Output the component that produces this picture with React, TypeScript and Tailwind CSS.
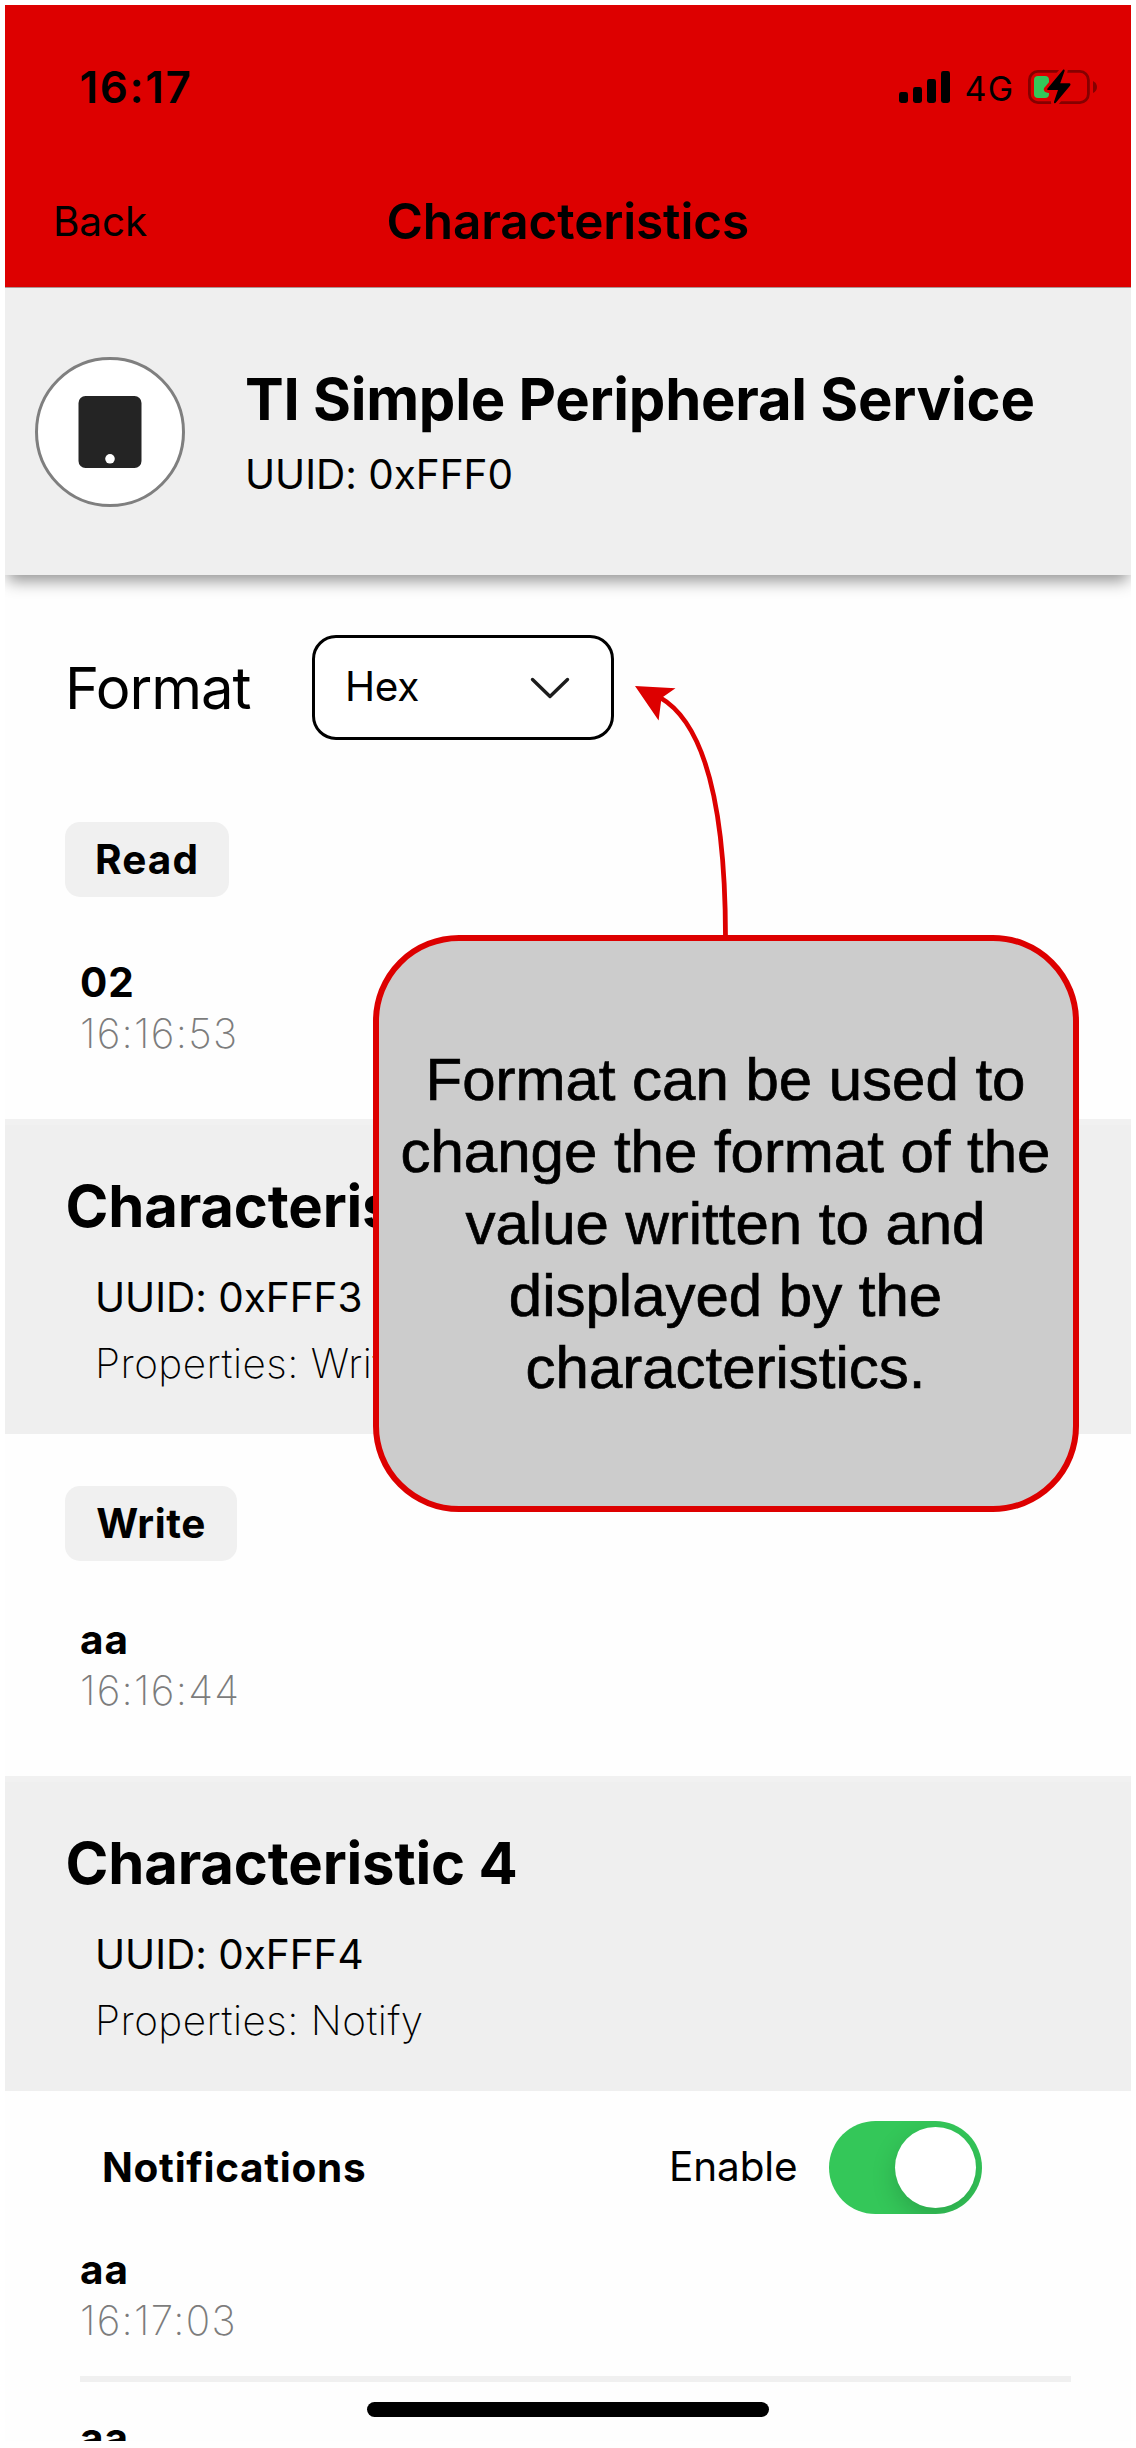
import React from "react";

function SignalIcon() {
  return (
    <svg width="51" height="32" viewBox="0 0 51 32" className="block">
      <rect x="0" y="21" width="9" height="11" rx="2.4" />
      <rect x="14" y="16" width="9" height="16" rx="2.4" />
      <rect x="28" y="8" width="9" height="24" rx="2.4" />
      <rect x="42" y="0" width="9" height="32" rx="2.4" />
    </svg>
  );
}

function BatteryIcon() {
  const bolt = "M18.9 20.3 35.3 0.6 Q37 0 36.6 2 L32.2 14.2 H41.6 Q43.2 14.8 42.2 16.5 L27.6 34 Q25.7 35 26 32.8 L30 20.9 H20.2 Q18.6 20.6 18.9 20.3 Z";
  return (
    <svg width="70" height="36" viewBox="0 0 70 36" className="block">
      <rect x="1.4" y="2.4" width="59" height="31.2" rx="8.5" fill="none" stroke="#850000" strokeWidth="2.8" />
      <path d="M65 12 Q69 14 69 18 Q69 22 65 24 Z" fill="#850000" />
      <rect x="6" y="7" width="15" height="22" rx="4" fill="#34c759" />
      <path d={bolt} fill="#dd0000" stroke="#dd0000" strokeWidth="6" strokeLinejoin="round" />
      <path d={bolt} fill="#000" />
    </svg>
  );
}

function StatusBar() {
  return (
    <div className="flex h-[164px] items-center pr-[33px] pl-[74.5px]">
      <span className="text-[44px] leading-[52px] font-semibold tracking-[1.65px]">16:17</span>
      <div className="ml-auto flex items-center">
        <SignalIcon />
        <span className="mt-[3px] ml-[15px] w-[63px] text-[34px] leading-[40px] tracking-[1.4px]">4G</span>
        <BatteryIcon />
      </div>
    </div>
  );
}

function NavBar() {
  return (
    <div className="grid h-[104px] grid-cols-[1fr_auto_1fr] items-center">
      <span className="pt-[2px] pl-[48px] text-[40.5px] leading-[52px] tracking-[-0.16px]">Back</span>
      <h1 className="text-[49.5px] leading-[60px] font-semibold tracking-[-0.15px]">Characteristics</h1>
    </div>
  );
}

function ServiceCard() {
  return (
    <div className="relative flex h-[287px] items-center bg-[#efefef] pl-[30px] shadow-[0_9px_15px_-3px_rgba(0,0,0,0.42)]">
      <div className="flex size-[150px] shrink-0 items-center justify-center rounded-full border-[3px] border-[#7f7f7f] bg-white">
        <svg width="64" height="72" viewBox="0 0 64 72">
          <rect x="0.5" width="63" height="72" rx="7" fill="#242424" />
          <circle cx="32" cy="62.8" r="4.8" fill="#fff" />
        </svg>
      </div>
      <div className="ml-[60px] pt-[11px]">
        <h2 className="text-[58px] leading-[75px] font-bold tracking-[-0.25px] whitespace-nowrap">TI Simple Peripheral Service</h2>
        <p className="text-[40.5px] leading-[75px] tracking-[-0.03px]">UUID: 0xFFF0</p>
      </div>
    </div>
  );
}

function FormatRow() {
  return (
    <div className="flex h-[105px] items-center pl-[60px]">
      <span className="w-[247px] text-[58px] leading-[70px] tracking-[-1.09px]">Format</span>
      <div className="flex h-[105px] w-[302px] items-center justify-between rounded-[24px] border-[3px] border-black bg-white pr-[41px] pl-[30px]">
        <span className="pb-[2px] text-[40.5px] leading-[52px] tracking-[-0.3px]">Hex</span>
        <svg width="40" height="22" viewBox="0 0 40 22" fill="none" stroke="#1c1c1c" strokeWidth="3.4" strokeLinecap="round" strokeLinejoin="round">
          <path d="M2.5 2.5 20 19.5 37.5 2.5" />
        </svg>
      </div>
    </div>
  );
}

function Entry({ value, time }: { value: string; time?: string }) {
  return (
    <div className="pl-[75px] text-[40.5px] leading-[51px]">
      <p className="font-bold tracking-[1px]">{value}</p>
      {time && <p className="font-[160] tracking-[1.3px] text-[#7c7c7c]">{time}</p>}
    </div>
  );
}

function ActionButton({ label, className }: { label: string; className: string }) {
  return (
    <button className={`ml-[60px] block h-[75px] rounded-[15px] bg-[#f0f0f0] text-[40.5px] leading-[75px] font-bold ${className}`}>
      {label}
    </button>
  );
}

function CharacteristicHeader({ n, uuid, properties }: { n: number; uuid: string; properties: string }) {
  return (
    <div className="h-[315px] border-t-[6px] border-[#f1f1f1] bg-[#efefef] pt-[46px]">
      <h3 className="pl-[60.5px] text-[58px] leading-[70px] font-bold tracking-[-0.17px]">Characteristic {n}</h3>
      <div className="pt-[24px] pl-[90px] text-[40.5px] leading-[66px]">
        <p className="tracking-[-0.03px]">UUID: {uuid}</p>
        <p className="font-extralight tracking-[0.48px]">Properties: {properties}</p>
      </div>
    </div>
  );
}

function Toggle() {
  return (
    <div className="flex h-[93px] w-[153px] items-center justify-end overflow-hidden rounded-full bg-[#34c759] pr-[6px]">
      <div className="size-[81px] rounded-full bg-white shadow-[0_9px_24px_rgba(0,0,0,0.17)]" />
    </div>
  );
}

function Callout() {
  return (
    <>
      <svg className="absolute top-[670px] left-[620px]" width="130" height="270" viewBox="620 670 130 270">
        <path d="M725.5 938 Q725.5 735 660 697.5" fill="none" stroke="#dd0000" strokeWidth="4.8" />
        <path d="M635 686 675.5 688.3 661.5 698 658.6 720.5 Z" fill="#dd0000" />
      </svg>
      <div className="absolute top-[935px] left-[372.5px] flex h-[577px] w-[706px] justify-center rounded-[86px] border-[6px] border-[#dd0000] bg-[#cccccc] pt-[103px] text-center font-['Liberation_Sans',sans-serif] text-[60px] leading-[72px] tracking-[-0.02px] [-webkit-text-stroke:0.7px_#000]">
        <p>
          Format can be used to
          <br />
          change the format of the
          <br />
          value written to and
          <br />
          displayed by the
          <br />
          characteristics.
        </p>
      </div>
    </>
  );
}

export default function App() {
  return (
    <div className="relative h-[2448px] w-[1136px] overflow-hidden bg-white pt-[5px] pl-[5px] font-[Inter,sans-serif] text-black">
      <div className="h-[2436px] w-[1125.5px] overflow-hidden bg-[#fefefe]">
        <header className="h-[283px] border-b border-[#b09a9a] bg-[#dd0000]">
          <StatusBar />
          <NavBar />
        </header>
        <ServiceCard />
        <main>
          <div className="pt-[60px]">
            <FormatRow />
          </div>
          <div className="mt-[82px]">
            <ActionButton label="Read" className="w-[164px] tracking-[1.1px]" />
          </div>
          <div className="mt-[60px] mb-[60px]">
            <Entry value="02" time="16:16:53" />
          </div>
          <CharacteristicHeader n={3} uuid="0xFFF3" properties="Write" />
          <div className="mt-[52px]">
            <ActionButton label="Write" className="w-[172px] tracking-[0.53px]" />
          </div>
          <div className="mt-[53px] mb-[60px]">
            <Entry value="aa" time="16:16:44" />
          </div>
          <CharacteristicHeader n={4} uuid="0xFFF4" properties="Notify" />
          <div className="mt-[30px] flex h-[93px] items-center pr-[149px] pl-[97px] text-[40.5px] leading-[52px]">
            <span className="font-bold tracking-[0.7px]">Notifications</span>
            <span className="mr-[31px] ml-auto pb-[2px] tracking-[-0.12px]">Enable</span>
            <Toggle />
          </div>
          <div className="mt-[30px]">
            <Entry value="aa" time="16:17:03" />
          </div>
          <div className="mt-[30px] mr-[60px] ml-[75px] h-[6px] bg-[#f0f0f0]" />
          <div className="mt-[30px]">
            <Entry value="aa" />
          </div>
        </main>
      </div>
      <Callout />
      <div className="absolute top-[2402px] left-[367px] h-[15px] w-[402px] rounded-full bg-black" />
    </div>
  );
}
